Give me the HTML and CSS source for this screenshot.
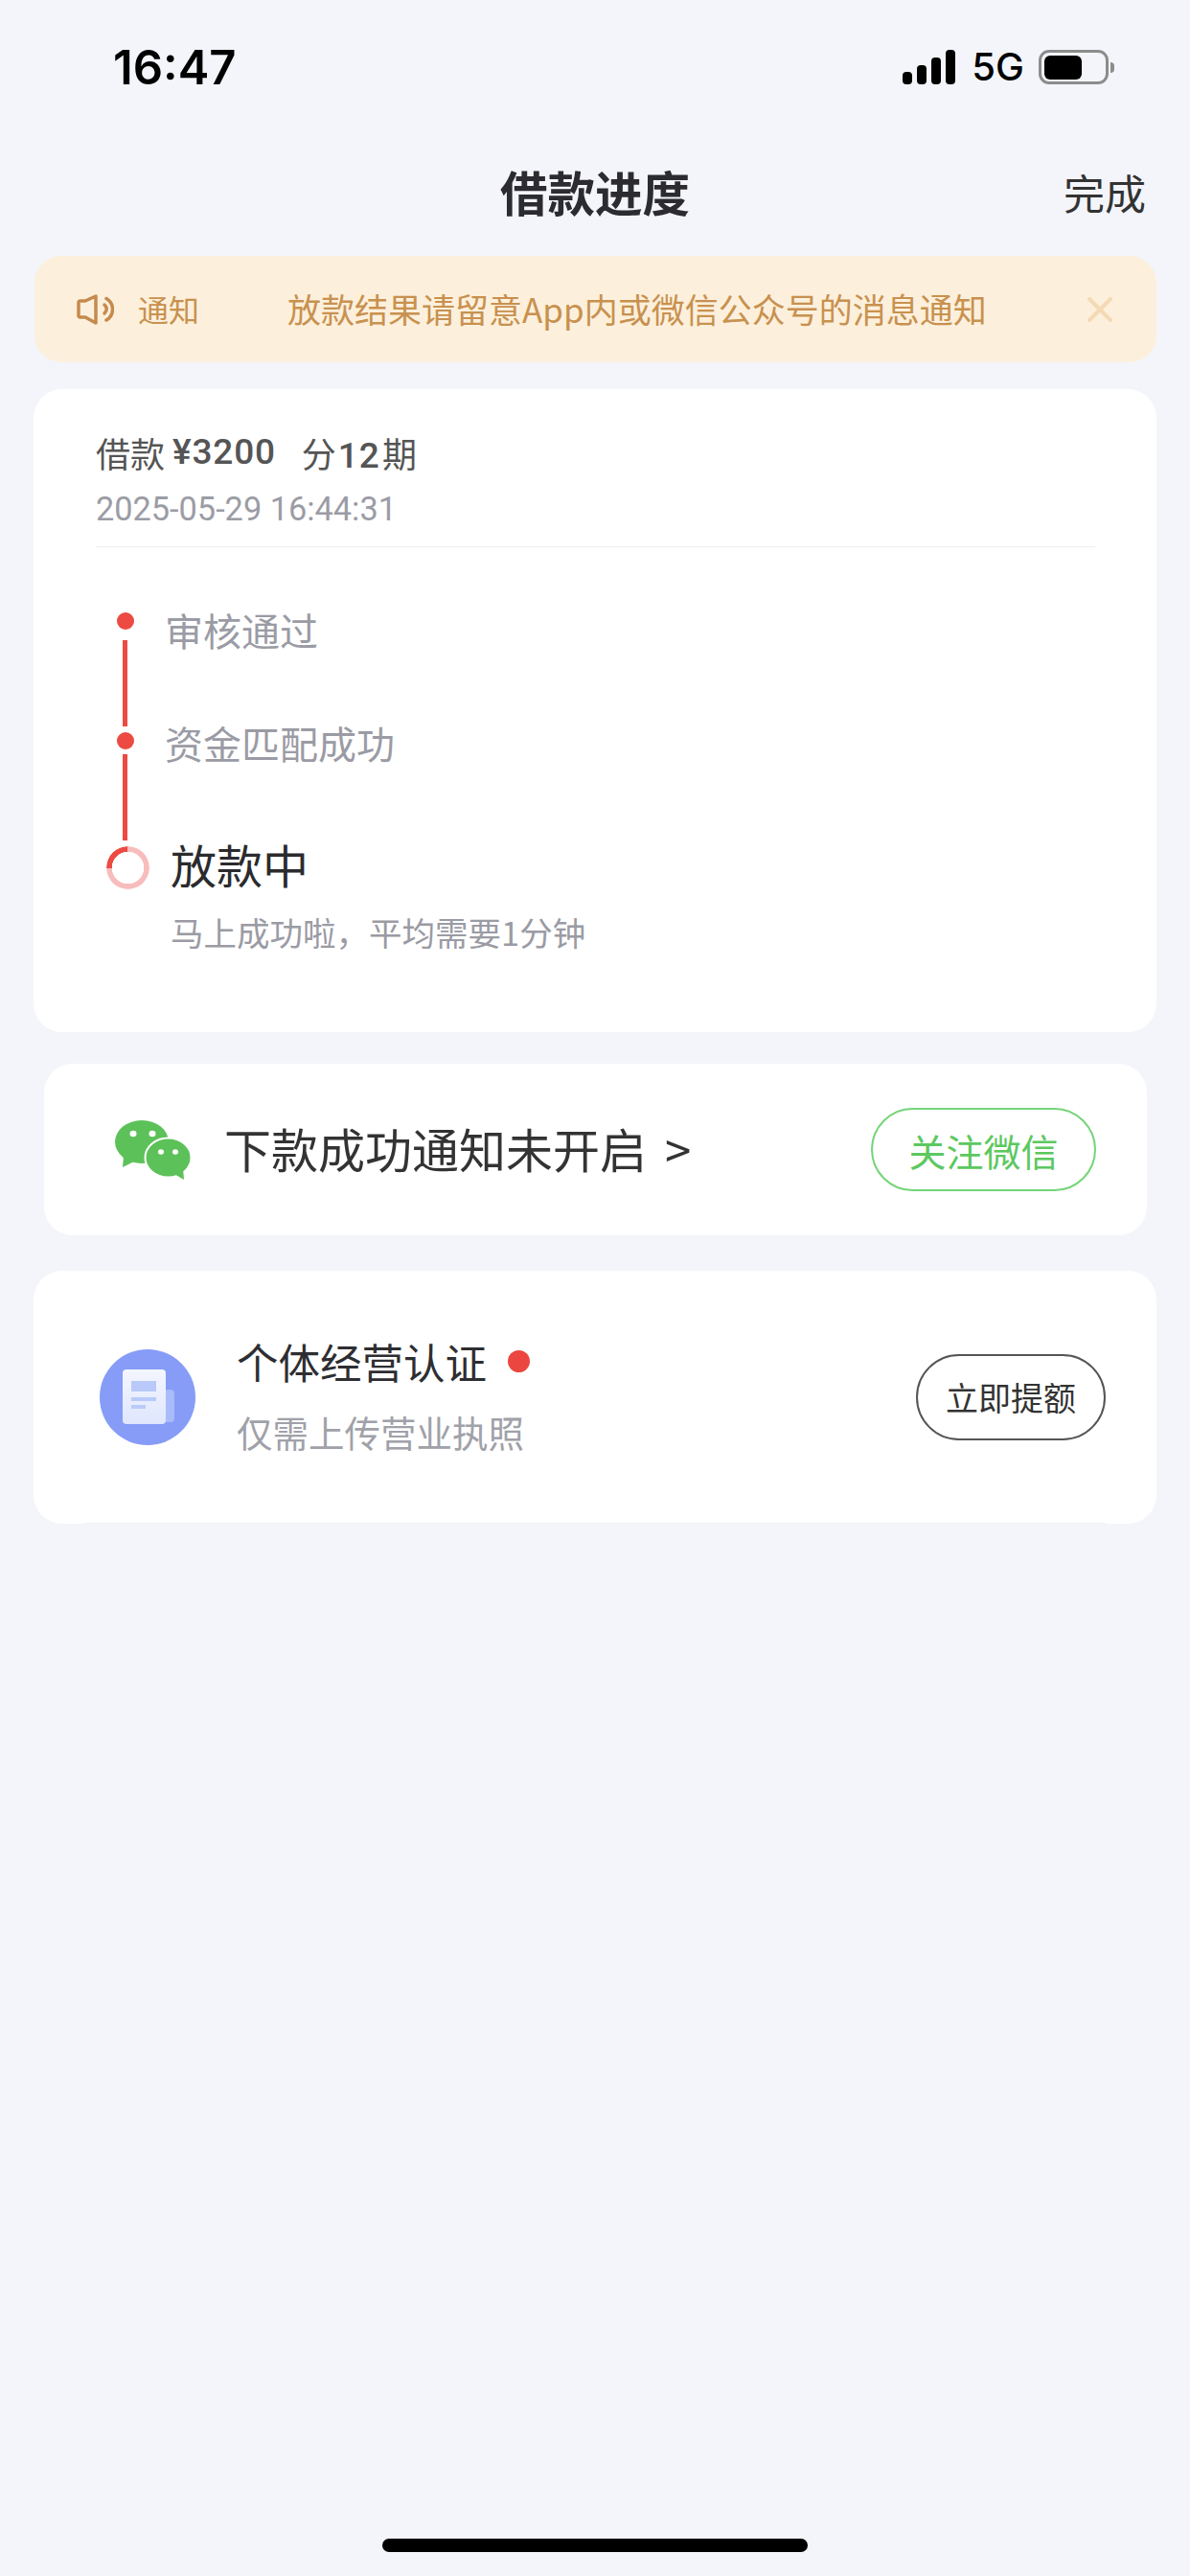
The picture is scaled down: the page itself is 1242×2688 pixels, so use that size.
FILE: index.html

```html
<!DOCTYPE html>
<html lang="zh-CN">
<head>
    <meta charset="UTF-8">
    <meta name="viewport" content="width=device-width, initial-scale=1.0">
    <title>借款进度</title>
    <link rel="stylesheet" href="styles.css">
</head>
<body>
    <div class="page">
        <div class="status-bar">
            <span class="time">16:47</span>
            <div class="status-icons">
                <div class="signal">
                    <i class="bar-1"></i><i class="bar-2"></i><i class="bar-3"></i><i class="bar-4"></i>
                </div>
                <span class="network">5G</span>
                <div class="battery"><i></i></div>
                <div class="battery-nub"></div>
            </div>
        </div>

        <div class="nav">
            <span></span>
            <h1 class="nav-title">借款进度</h1>
            <span class="nav-done">完成</span>
        </div>

        <div class="notice">
            <svg class="notice-icon" width="39" height="32" viewBox="0 0 39 32" fill="none" stroke="#c58a4c" stroke-width="3.500" stroke-linecap="round" stroke-linejoin="round">
                <path d="M4 7H9L20 2V30L9 24H4Q2 24 2 22V9Q2 7 4 7Z"></path>
                <path d="M31 4.500A13 13 0 0 1 31 27"></path>
                <path d="M29 11Q33.500 15.500 29 20"></path>
            </svg>
            <span class="notice-label">通知</span>
            <span class="notice-text">放款结果请留意App内或微信公众号的消息通知</span>
            <svg class="notice-close" width="26" height="26" viewBox="0 0 26 26" fill="none" stroke="#f3d9b5" stroke-width="4" stroke-linecap="round">
                <path d="M2 2L24 24"></path>
                <path d="M24 2L2 24"></path>
            </svg>
        </div>

        <div class="card progress-card">
            <div class="loan-head">
                <div class="loan-title">
                    <span>借款</span>
                    <span class="num">¥3200</span>
                    <span class="loan-term">分<span class="num">12</span>期</span>
                </div>
                <div class="loan-date">2025-05-29 16:44:31</div>
            </div>

            <div class="timeline">
                <div class="step step-first">
                    <div class="marker">
                        <i class="dot"></i>
                        <i class="line"></i>
                    </div>
                    <div class="step-label">审核通过</div>
                </div>
                <div class="step step-second">
                    <div class="marker">
                        <i class="dot"></i>
                        <i class="line"></i>
                    </div>
                    <div class="step-label">资金匹配成功</div>
                </div>
                <div class="step step-current">
                    <div class="marker">
                        <div class="ring"></div>
                    </div>
                    <div class="step-body">
                        <div class="step-title">放款中</div>
                        <div class="step-desc">马上成功啦，平均需要1分钟</div>
                    </div>
                </div>
            </div>
        </div>

        <div class="card wechat-card">
            <svg class="wechat-icon" width="79" height="62" viewBox="0 0 79 62">
                <path d="M9 37L8 49L20 43Z" fill="#5dc15a"></path>
                <ellipse cx="28" cy="22.500" rx="28" ry="22.500" fill="#5dc15a"></ellipse>
                <ellipse cx="55.500" cy="39" rx="24" ry="20.500" fill="#5dc15a" stroke="#fff" stroke-width="2"></ellipse>
                <path d="M60 55L72 62L71 50Z" fill="#5dc15a"></path>
                <ellipse cx="19" cy="14" rx="3.500" ry="3.200" fill="#fff"></ellipse>
                <ellipse cx="39" cy="14" rx="3.500" ry="3.200" fill="#fff"></ellipse>
                <ellipse cx="48" cy="33" rx="3" ry="2.800" fill="#fff"></ellipse>
                <ellipse cx="63" cy="33" rx="3" ry="2.800" fill="#fff"></ellipse>
            </svg>
            <span class="wechat-text">下款成功通知未开启 &gt;</span>
            <button class="btn btn-green" type="button">关注微信</button>
        </div>

        <div class="card biz-card">
            <div class="biz-row">
                <div class="biz-icon">
                    <svg width="100" height="100" viewBox="0 0 100 100">
                        <defs>
                            <linearGradient id="docFill" x1="0" y1="0" x2="0" y2="1">
                                <stop offset="0" stop-color="#f4f6ff"></stop>
                                <stop offset="1" stop-color="#dfe6fd"></stop>
                            </linearGradient>
                        </defs>
                        <rect x="60" y="42" width="18" height="34" rx="4" fill="#a9bbf9"></rect>
                        <rect x="24" y="21" width="45" height="57" rx="4" fill="url(#docFill)"></rect>
                        <rect x="33" y="33" width="26" height="11" fill="#b9cafa"></rect>
                        <rect x="33" y="50" width="26" height="4" fill="#b9cafa"></rect>
                        <rect x="33" y="58" width="15" height="4" fill="#b9cafa"></rect>
                    </svg>
                </div>
                <div class="biz-text">
                    <div class="biz-title">个体经营认证<i class="red-dot"></i></div>
                    <div class="biz-desc">仅需上传营业执照</div>
                </div>
                <button class="btn btn-dark" type="button">立即提额</button>
            </div>
        </div>

        <div class="home-bar"></div>
    </div>
</body>
</html>
```

FILE: styles.css

```css
* {
    box-sizing: border-box;
}
body {
    margin: 0;
    background-color: #f3f5fa;
    font-family: "Noto Sans CJK SC", Roboto, sans-serif;
    color: #333;
}
i {
    display: block;
}
.page {
    position: relative;
    width: 1242px;
    height: 2688px;
    overflow: hidden;
}

/* status bar */
.status-bar {
    height: 140px;
    padding: 47px 79px 0 118px;
    display: flex;
    justify-content: space-between;
    align-items: flex-start;
}
.time {
    font-family: Inter, sans-serif;
    font-size: 49px;
    font-weight: 600;
    line-height: 48px;
    color: #000;
}
.status-icons {
    display: flex;
    align-items: center;
    margin-top: 5px;
}
.signal {
    display: flex;
    align-items: flex-end;
    gap: 5px;
    height: 36px;
}
.signal i {
    width: 10px;
    background-color: #000;
    border-radius: 4px;
}
.bar-1 { height: 13px; }
.bar-2 { height: 20px; }
.bar-3 { height: 28px; }
.bar-4 { height: 36px; }
.network {
    margin-left: 17px;
    font-family: Inter, sans-serif;
    font-size: 40px;
    font-weight: 500;
    line-height: 36px;
    color: #000;
}
.battery {
    margin-left: 15px;
    width: 73px;
    height: 36px;
    padding: 3px;
    border: 3px solid #8c8c8c;
    border-radius: 11px;
}
.battery i {
    width: 39px;
    height: 25px;
    background-color: #000;
    border-radius: 6px;
}
.battery-nub {
    margin-left: 2px;
    width: 4px;
    height: 11px;
    background-color: #8c8c8c;
    border-radius: 0 4px 4px 0;
}

/* nav */
.nav {
    height: 127px;
    padding: 0 46px 7px;
    display: grid;
    grid-template-columns: 1fr auto 1fr;
    align-items: center;
}
.nav-title {
    margin: 0;
    font-size: 49.500px;
    font-weight: 700;
    line-height: 60px;
    color: #2b2b30;
}
.nav-done {
    justify-self: end;
    font-size: 43px;
    line-height: 60px;
}

/* notice */
.notice {
    height: 111px;
    margin: 0 35px 0 36px;
    padding: 0 46px 0 44px;
    display: flex;
    align-items: center;
    background-color: #fcf0dc;
    border-radius: 28px;
    color: #c8914f;
}
.notice-label {
    margin-left: 25px;
    font-size: 32px;
    line-height: 44px;
    padding-bottom: 2px;
}
.notice-text {
    margin-left: 92px;
    font-size: 35px;
    line-height: 44px;
    padding-bottom: 2px;
}
.notice-close {
    margin-left: auto;
}

/* cards */
.card {
    background-color: #fff;
    border-radius: 30px;
}
.progress-card {
    height: 671px;
    margin: 28px 35px 0;
    padding: 41px 64px 0 65px;
}
.loan-head {
    padding-bottom: 19px;
    border-bottom: 1px solid #eeeff2;
}
.loan-title {
    display: flex;
    font-size: 36px;
    line-height: 50px;
    color: #555;
}
.num {
    margin-left: 8px;
    font-family: Roboto, sans-serif;
    font-size: 37px;
    font-weight: 500;
    letter-spacing: 0.800px;
}
.loan-term {
    margin-left: 27px;
}
.loan-term .num {
    margin-left: 0;
    padding: 0 2px;
    letter-spacing: 1px;
}
.loan-date {
    margin-top: 10px;
    font-family: Roboto, sans-serif;
    font-size: 34.300px;
    line-height: 40px;
    color: #9b9ca5;
}

/* timeline */
.timeline {
    padding-top: 68px;
}
.step {
    display: flex;
}
.marker {
    flex: none;
    width: 61px;
    display: flex;
    flex-direction: column;
    align-items: center;
}
.dot {
    width: 18px;
    height: 18px;
    background-color: #ec4a42;
    border-radius: 50%;
}
.line {
    width: 5px;
    height: 90px;
    background-color: #ec4a42;
}
.step-first .line {
    margin: 11px 0 6px;
}
.step-second .line {
    margin: 5px 0 6px;
}
.step-label {
    margin-left: 11px;
    font-size: 40px;
    line-height: 36px;
    color: #9a9ba4;
}
.step-second .step-label {
    margin-top: -7px;
}
.ring {
    width: 45px;
    height: 45px;
    margin-left: 6px;
    border-radius: 50%;
    background: conic-gradient(#f8bcbc 0 75%, #ec4a42 75% 100%);
    -webkit-mask: radial-gradient(circle, transparent 16.500px, #000 17px);
    mask: radial-gradient(circle, transparent 16.500px, #000 17px);
}
.step-body {
    margin: -12px 0 0 17px;
}
.step-title {
    font-size: 48px;
    line-height: 60px;
    color: #2b2b2e;
}
.step-desc {
    margin-top: 19px;
    font-size: 34.500px;
    line-height: 44px;
    color: #9a9ba4;
}

/* wechat */
.wechat-card {
    height: 179px;
    margin: 33px 45px 0 46px;
    padding: 0 53px 0 74px;
    display: flex;
    align-items: center;
}
.wechat-text {
    margin-left: 35px;
    padding-bottom: 5px;
    font-size: 49px;
    word-spacing: 8px;
    color: #333;
}
.btn {
    margin-left: auto;
    background-color: #fff;
    border-radius: 46px;
    font-family: inherit;
    padding: 0;
}
.btn-green {
    width: 235px;
    height: 87px;
    border: 2px solid #74d478;
    font-size: 39px;
    color: #5cc85f;
}
.btn-dark {
    width: 198px;
    height: 90px;
    border: 2px solid #555;
    font-size: 34px;
    color: #333;
}

/* business licence */
.biz-card {
    height: 264px;
    margin: 37px 35px 0;
}
.biz-row {
    height: 264px;
    margin: 0 53px;
    padding-left: 16px;
    display: flex;
    align-items: center;
    border-bottom: 1px solid #f1f2f6;
}
.biz-icon {
    width: 100px;
    height: 100px;
    background-color: #869cf7;
    border-radius: 50%;
}
.biz-icon svg {
    display: block;
}
.biz-text {
    margin: 0 0 7px 43px;
}
.biz-title {
    display: flex;
    align-items: center;
    gap: 22px;
    font-size: 43.500px;
    line-height: 56px;
    color: #2e2e32;
}
.red-dot {
    width: 23px;
    height: 23px;
    background-color: #ec4640;
    border-radius: 50%;
}
.biz-desc {
    margin-top: 23px;
    font-size: 37.500px;
    line-height: 44px;
    color: #a0a1a9;
}

.home-bar {
    position: absolute;
    left: 399px;
    bottom: 25px;
    width: 444px;
    height: 14px;
    background-color: #000;
    border-radius: 7px;
}
```
